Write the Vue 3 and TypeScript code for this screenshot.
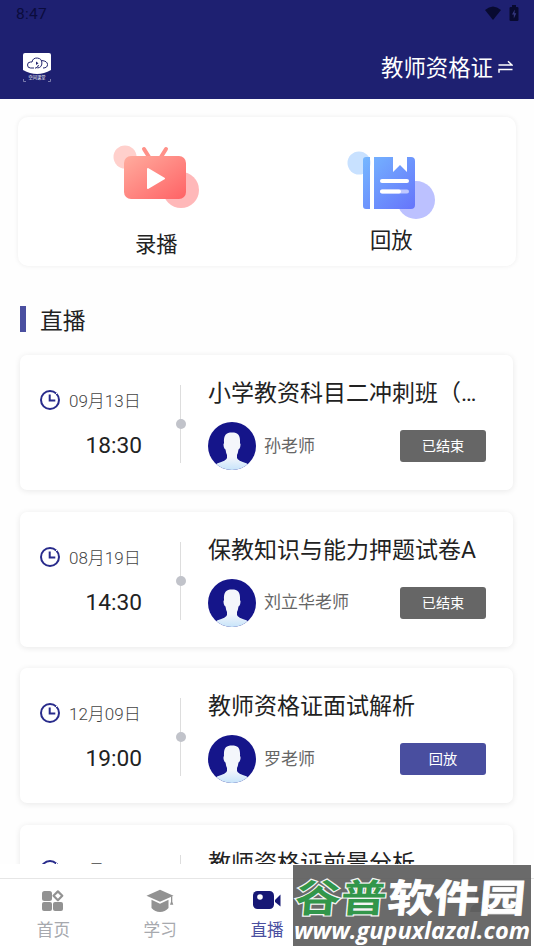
<script setup lang="ts">
interface Lesson {
  date: string
  time: string
  title: string
  teacher: string
  action: string
  replay: boolean
}

const lessons: Lesson[] = [
  { date: '09月13日', time: '18:30', title: '小学教资科目二冲刺班（教育知识）', teacher: '孙老师', action: '已结束', replay: false },
  { date: '08月19日', time: '14:30', title: '保教知识与能力押题试卷A', teacher: '刘立华老师', action: '已结束', replay: false },
  { date: '12月09日', time: '19:00', title: '教师资格证面试解析', teacher: '罗老师', action: '回放', replay: true },
  { date: '09月08日', time: '19:00', title: '教师资格证前景分析', teacher: '罗老师', action: '回放', replay: true },
]
</script>

<template>
  <div class="screen">
    <header class="top">
      <div class="status">
        <span class="clock">8:47</span>
        <span class="signals">
          <svg class="wifi" viewBox="0 0 18 14"><path d="M1 4Q9-3 17 4L9 14Z" /></svg>
          <svg class="battery" viewBox="0 0 10 16">
            <path d="M3 0h4v2h1.2q1.3 0 1.3 1.3V14.7Q9.500 16 8.200 16H1.800Q.5 16 .5 14.700V3.300Q.5 2 1.800 2H3Z" />
            <path class="bolt" d="M5.800 4.500 3 9.500h1.800v4L7.300 8.300H5.500Z" />
          </svg>
        </span>
      </div>
      <div class="nav">
        <svg class="logo" viewBox="0 0 28 29">
          <path d="M2 0H26Q28 0 28 2V17Q21 21 14 21T0 17V2Q0 0 2 0Z" fill="#fff" />
          <g fill="none" stroke="#22256f" stroke-width="1">
            <path d="M11 15H7.500A3 3 0 0 1 7.500 9H9A5 5 0 1 1 14.500 15" />
            <path d="M12 15.200Q15 15 15.500 12M18.500 7.500Q24.500 8 24.500 11.500T20 15" />
          </g>
          <path d="M13 8.500 15.500 10.200 13 12Z" fill="#22256f" />
          <path d="M0.500 26v2.500H3M27.500 26v2.500H25" fill="none" stroke="#8f90bb" stroke-width=".8" />
          <text x="14" y="26.200" text-anchor="middle" class="logo-text">空间课堂</text>
        </svg>
        <div class="subject">
          <span>教师资格证</span>
          <svg class="swap" viewBox="0 0 15 14">
            <path d="M.5 5H14L10 1.300M14.500 9.500H1V12.800" fill="none" stroke="#fff" stroke-width="1.500" />
          </svg>
        </div>
      </div>
    </header>

    <main class="content">
      <section class="shortcuts">
        <div class="shortcut record">
          <svg viewBox="0 0 88 66">
            <defs>
              <linearGradient id="tv" x1="0" y1="0" x2="1" y2="1"><stop offset="0" stop-color="#ffac9e" /><stop offset="1" stop-color="#ff6265" /></linearGradient>
            </defs>
            <circle cx="12" cy="13" r="11.500" fill="#ffd0cc" />
            <circle cx="68" cy="46" r="18" fill="#ffb8b9" />
            <path d="M31 5 36 13M53 5 48 13" stroke="#ff9189" stroke-width="4" stroke-linecap="round" />
            <rect x="11" y="12" width="62" height="43" rx="7" fill="url(#tv)" />
            <path d="M35 25 51 34.500 35 44Z" fill="#fff" stroke="#fff" stroke-width="2" stroke-linejoin="round" />
          </svg>
          <span>录播</span>
        </div>
        <div class="shortcut replay">
          <svg viewBox="0 0 88 70">
            <defs>
              <linearGradient id="book" x1="0" y1="0" x2="1" y2="1"><stop offset="0" stop-color="#75b7ff" /><stop offset="1" stop-color="#6674fb" /></linearGradient>
            </defs>
            <circle cx="12" cy="13" r="11.500" fill="#c8e1ff" />
            <circle cx="69" cy="50" r="19" fill="#bcc1ff" />
            <path d="M19 7h4v52h-4q-3 0-3-3V10q0-3 3-3ZM27 7H46V22L53 15 60 22V7H64Q68 7 68 11V55Q68 59 64 59H27Z" fill="url(#book)" />
            <path d="M35 31H60" stroke="#fff" stroke-width="4" stroke-linecap="round" />
            <path d="M35 41.500H60" stroke="#c0c8ff" stroke-width="4" stroke-linecap="round" />
            <path d="M35 41.500H52" stroke="#fff" stroke-width="4" stroke-linecap="round" />
          </svg>
          <span>回放</span>
        </div>
      </section>

      <h2 class="heading"><span>直播</span></h2>

      <article v-for="(l, i) in lessons" :key="i" class="card">
        <div class="when">
          <div class="date">
            <svg viewBox="0 0 20 20">
              <circle cx="10" cy="10" r="9" />
              <path d="M9.700 4.500V10.500H15.300" />
              <path class="notch" d="M15.400 4.600 17.700 2.300" />
            </svg>
            <span>{{ l.date }}</span>
          </div>
          <div class="time">{{ l.time }}</div>
        </div>
        <div class="line"><i></i></div>
        <div class="info">
          <h3>{{ l.title }}</h3>
          <div class="row">
            <svg class="avatar" viewBox="0 0 48 48">
              <defs>
                <linearGradient id="person" x1="0" y1="0" x2="0" y2="1"><stop offset=".65" stop-color="#f4f6fb" /><stop offset="1" stop-color="#c7e4fa" /></linearGradient>
                <clipPath id="round"><circle cx="24" cy="24" r="24" /></clipPath>
              </defs>
              <g clip-path="url(#round)">
                <rect width="48" height="48" fill="#15158a" />
                <path d="M24 10.500C30 10.500 32.500 13 32 21Q33 22 32.200 25 31.500 27 30.500 27.500 30 31 29 33V36Q29.500 38.500 39 41.500L42 48H6L9 41.500Q18.500 38.500 19 36V33Q18 31 17.500 27.500 16.500 27 15.800 25 15 22 16 21C15.500 13 18 10.500 24 10.500Z" fill="url(#person)" />
              </g>
            </svg>
            <span class="teacher">{{ l.teacher }}</span>
            <button :class="{ on: l.replay }">{{ l.action }}</button>
          </div>
        </div>
      </article>
    </main>

    <footer class="tabs">
      <div class="tab">
        <svg viewBox="0 0 28 28">
          <rect x="3" y="3" width="10" height="10" rx="2.500" /><rect x="3" y="14" width="10" height="9" rx="2" /><rect x="14" y="14" width="10" height="9" rx="2" />
          <path d="M18.900 3.400 23.300 7.800 18.900 12.200 14.500 7.800Z" fill="none" stroke="#929292" stroke-width="2.200" stroke-linejoin="round" />
        </svg>
        <span>首页</span>
      </div>
      <div class="tab">
        <svg viewBox="0 0 28 28">
          <path d="M.5 7.800 14 1.800 27.500 7.800 14 13.800Z" />
          <path d="M5.500 11.800 14 15.800 22.500 11.800V20Q19 24 14 24T5.500 20Z" />
          <path d="M25 8.300h1.300v5.500l1 3h-3.300l1-3Z" />
        </svg>
        <span>学习</span>
      </div>
      <div class="tab active">
        <svg viewBox="0 0 28 28">
          <rect x="0" y="3" width="21" height="18" rx="4.500" /><path d="M22 12 27.500 6.500V18.500L22 14Z" />
          <circle cx="7" cy="9" r="2.800" fill="#fff" />
        </svg>
        <span>直播</span>
      </div>
      <div class="tab"></div>
      <div class="tab">
        <svg viewBox="0 0 28 28"><circle cx="14" cy="8" r="6" /><path d="M3 24Q3 15 14 15T25 24Z" /></svg>
      </div>
    </footer>

    <div class="mark">
      <svg viewBox="0 0 238 81">
        <g class="mark-name" transform="translate(1 47) skewX(-5) scale(1.190 1)">
          <text class="green" x="0" y="0">谷普</text>
          <text class="white" x="78" y="0">软件园</text>
        </g>
        <text class="mark-url" x="1" y="73.500" textLength="236" lengthAdjust="spacingAndGlyphs">www.gupuxlazal.com</text>
      </svg>
    </div>
  </div>
</template>

<style>
body { margin: 0; background: #fff; }
</style>

<style scoped>
.screen {
  position: relative;
  display: flex;
  flex-direction: column;
  width: 534px;
  height: 950px;
  overflow: hidden;
  background: #fefefe;
  color: #222;
  font-family: Roboto, "Noto Sans CJK SC", sans-serif;
}
.screen svg { display: block; flex: none; }
.top { flex: none; height: 99px; background: #1e2071; }
.status { display: flex; justify-content: space-between; height: 27px; padding: 0 15px 0 16px; line-height: 28px; color: #0b0c3d; }
.clock { font-size: 15.5px; letter-spacing: .3px; }
.signals { display: flex; gap: 7px; padding-top: 5px; fill: #080a30; }
.wifi { width: 18px; height: 14px; padding-top: 1px; }
.battery { width: 10px; height: 16px; }
.bolt { fill: #34377f; }
.nav { display: flex; justify-content: space-between; padding: 26px 21px 0 23px; }
.logo { width: 28px; height: 29px; }
.logo-text { font-size: 4.2px; font-weight: 400; fill: #fff; }
.subject { display: flex; gap: 5px; height: 30px; color: #fff; font-size: 22.4px; line-height: 31px; }
.swap { width: 15px; height: 14px; padding-top: 7px; }
.content { flex: 1; min-height: 0; overflow: hidden; padding: 18px 21px 0 20px; }
.shortcuts { display: grid; grid-template-columns: 1fr 1fr; height: 149px; margin: 0 -3px 0 -2px; background: #fff; border-radius: 10px; box-shadow: 0 0 5px rgba(0, 0, 0, .07); }
.shortcut { display: flex; flex-direction: column; font-size: 21.3px; line-height: 28px; }
.record { padding: 27px 0 0 95px; }
.record svg { width: 88px; height: 66px; }
.record span { padding: 21px 0 0 22px; }
.replay { padding: 33px 0 0 80px; }
.replay svg { width: 88px; height: 70px; }
.replay span { padding: 7px 0 0 23px; }
.heading { display: flex; align-items: center; gap: 15px; height: 28px; margin: 39px 0 22px; font-size: 22.8px; font-weight: 400; line-height: 28px; }
.heading::before { content: ""; width: 6px; height: 26px; background: #4a4fa0; }
.heading span { padding-top: 5px; margin-left: -1px; }
.card { display: flex; height: 135px; margin-bottom: 21.6px; border-radius: 7px; background: #fff; box-shadow: 0 1px 6px rgba(0, 0, 0, .09); }
.when { width: 122px; padding-top: 34px; text-align: right; }
.date { display: flex; align-items: center; gap: 9px; height: 22px; padding-left: 20px; color: #444; font-size: 17px; line-height: 22px; white-space: nowrap; }
.date span { padding-top: 2px; font-weight: 300; }
.date svg { width: 20px; height: 20px; fill: none; stroke: #282b8b; stroke-width: 2; }
.date .notch { stroke: #fff; stroke-width: 1; }
.time { margin-top: 20px; font-size: 22.7px; line-height: 30px; }
.line { display: flex; align-items: center; justify-content: center; width: 1px; height: 78px; margin: 30px 28px 0 38px; background: #ddd; }
.line i { flex: none; width: 10px; height: 10px; border-radius: 50%; background: #c1c3ca; }
.info { width: 278px; margin-left: -1px; padding-top: 22px; }
.info h3 { width: 274px; margin: 0; overflow: hidden; font-size: 23px; font-weight: 400; line-height: 33px; text-overflow: ellipsis; white-space: nowrap; }
.row { display: flex; align-items: center; height: 48px; margin-top: 12px; }
.avatar { width: 48px; height: 48px; }
.teacher { flex: 1; padding-left: 8px; color: #666; font-size: 17px; line-height: 24px; padding-bottom: 1px; }
button { width: 86px; height: 32px; padding: 0; border: 0; border-radius: 3px; background: #666; color: #fff; font: inherit; font-size: 14.2px; line-height: 32px; }
button.on { background: #494e9f; }
.tabs { display: grid; flex: none; grid-template-columns: repeat(5, 1fr); box-sizing: border-box; height: 86px; border-top: 14px solid #fff; background: #fff; box-shadow: inset 0 1px #e6e6e6; }
.tab { display: flex; flex-direction: column; align-items: center; padding-top: 10px; color: #a7a9ae; font-size: 16.6px; line-height: 24px; fill: #929292; }
.tab svg { width: 28px; height: 28px; }
.tab span { padding-top: 3px; }
.active { color: #4a4fa0; fill: #171875; }
.mark { position: absolute; top: 865px; left: 293px; width: 238px; height: 81px; background: rgba(90, 90, 90, .9); }
.mark svg { width: 238px; height: 81px; overflow: visible; }
.mark-name { font-family: "Noto Sans CJK SC", sans-serif; font-size: 38.5px; font-weight: 700; }
.green { fill: #32964a; stroke: #f4f4f4; stroke-width: 2.4px; paint-order: stroke; }
.white { fill: #fff; stroke: #fff; stroke-width: .8px; }
.mark-url { fill: #fff; font-family: "Open Sans", sans-serif; font-size: 24px; font-style: italic; font-weight: 700; }
</style>
